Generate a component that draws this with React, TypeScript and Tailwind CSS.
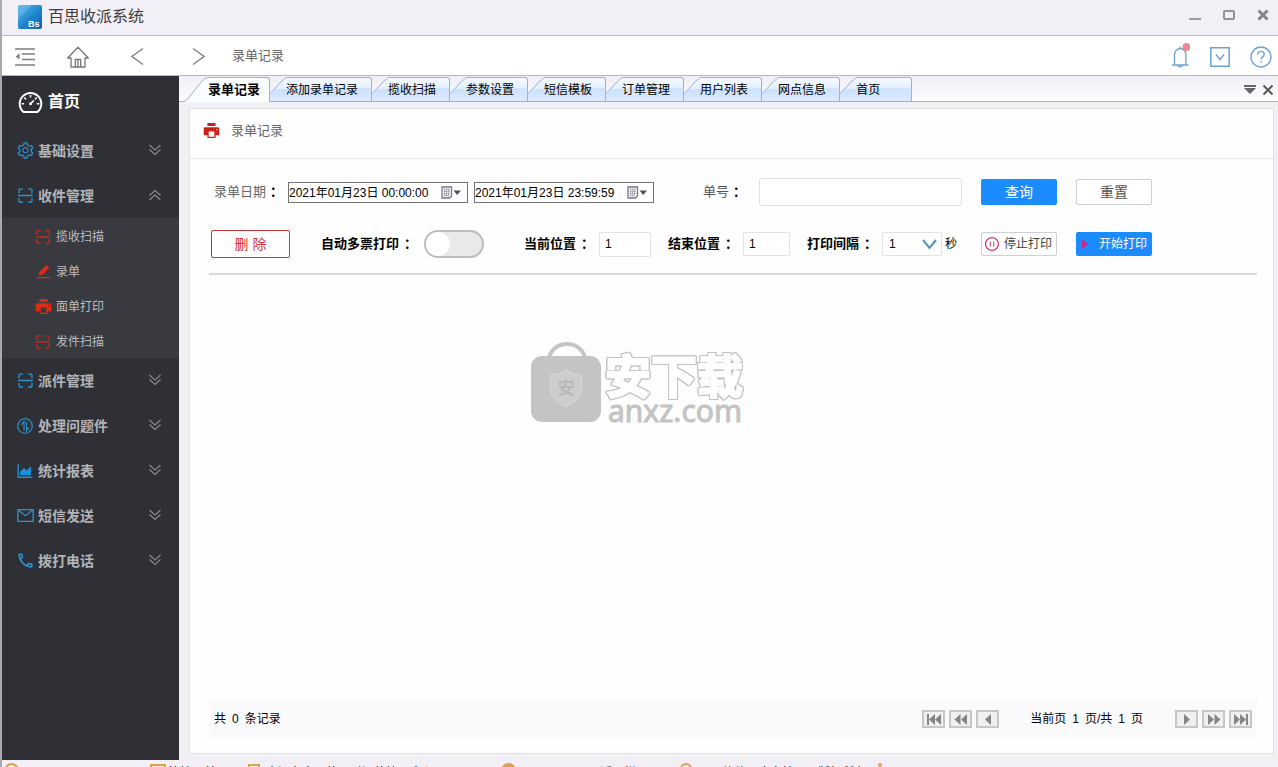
import React from "react";
import {
  AiFillEdit,
  AiFillPrinter,
  AiOutlineAreaChart,
  AiOutlineDashboard,
  AiOutlineMail,
  AiOutlinePauseCircle,
  AiOutlineScan,
  AiOutlineSetting,
} from "react-icons/ai";
import { MdOutlineCall } from "react-icons/md";

/* ---------- icons ---------- */

function Logo() {
  return (
    <svg width="24" height="24" viewBox="0 0 24 24" aria-hidden="true">
      <defs>
        <linearGradient id="logo" x1="0" y1="0" x2="1" y2="1">
          <stop offset="0" stopColor="#5db4e6" />
          <stop offset="0.5" stopColor="#2589cf" />
          <stop offset="1" stopColor="#0e5da6" />
        </linearGradient>
      </defs>
      <rect width="24" height="24" rx="2" fill="url(#logo)" />
      <path d="M0 14 14 0H2Q0 0 0 2Z" fill="#6fc0ec" opacity="0.5" />
      <path d="M24 6 12 12 0 24h10L24 12Z" fill="#1b7cc6" opacity="0.5" />
      <text x="10" y="22" fontSize="9" fontWeight="700" fill="#fff" fontFamily="Liberation Sans, sans-serif">
        Bs
      </text>
    </svg>
  );
}

function MenuFoldIcon() {
  return (
    <svg width="20" height="18" viewBox="0 0 20 18" fill="none" stroke="#7d7d7d" strokeWidth="1.300" aria-hidden="true">
      <path d="M0 1h20M7 6h13M7 11.500h13M0 17h20" />
      <path d="M4.500 5.500v6L.5 8.500Z" fill="#7d7d7d" stroke="none" />
    </svg>
  );
}

function HomeIcon() {
  return (
    <svg width="22" height="22" viewBox="0 0 22 22" fill="none" stroke="#777" strokeWidth="1.300" aria-hidden="true">
      <path d="M.7 12 11 1.200 21.300 12H18v9h-4.300v-7.500H8.300V21H4v-9Z" strokeLinejoin="round" />
      <path d="M11 14v7M8 21h6" />
    </svg>
  );
}

function AngleIcon({ right = false }: { right?: boolean }) {
  return (
    <svg width="13" height="19" viewBox="0 0 13 19" fill="none" stroke="#858585" strokeWidth="1.400" aria-hidden="true">
      <path d={right ? "M1 1.500 12 9.500 1 17.500" : "M12 1.500 1 9.500 12 17.500"} />
    </svg>
  );
}

function BellIcon() {
  return (
    <svg width="20" height="25" viewBox="0 0 20 25" fill="none" stroke="#6ea2d6" strokeWidth="1.400" aria-hidden="true">
      <path d="M4.500 21.500V12a5.700 6.500 0 0 1 11.400 0v9.500" />
      <path d="M2 22h16.500M10.200 3.500v2.500M8 22.300a2.300 2 0 0 0 4.500 0" />
      <circle cx="16.500" cy="4" r="4" fill="#ee8591" stroke="none" />
    </svg>
  );
}

function BoxDownIcon() {
  return (
    <svg width="20" height="20" viewBox="0 0 20 20" fill="none" stroke="#6ea2d6" strokeWidth="1.500" aria-hidden="true">
      <path d="M.8.8h18.400v18.400H.8ZM6 7.500l4 5 4-5" />
    </svg>
  );
}

function HelpIcon() {
  return (
    <svg width="22" height="22" viewBox="0 0 22 22" fill="none" stroke="#6ea2d6" strokeWidth="1.400" aria-hidden="true">
      <circle cx="11" cy="11" r="10" />
      <path d="M7.700 8.500c0-4.300 6.600-4 6.600-.3 0 2.400-3.300 2.500-3.300 5.300M11 15v1.800" />
    </svg>
  );
}

function DoubleChevron({ up = false }: { up?: boolean }) {
  return (
    <svg
      width="12"
      height="12"
      viewBox="0 0 12 12"
      fill="none"
      stroke="#8b8b8f"
      strokeWidth="1.100"
      className={up ? "rotate-180" : ""}
      aria-hidden="true"
    >
      <path d="M.5 1 6 6l5.500-5M.5 5.500 6 10.500l5.500-5" />
    </svg>
  );
}

function TransferIcon() {
  return (
    <svg width="16" height="16" viewBox="0 0 16 16" fill="none" stroke="#2f8ac0" strokeWidth="1.300" aria-hidden="true">
      <circle cx="8" cy="8" r="7.300" />
      <path d="M7 12.500v-9L4.200 6.800M9.500 3.500v9l2.300-3" />
    </svg>
  );
}

function CalendarIcon() {
  return (
    <svg width="20" height="13" viewBox="0 0 20 13" aria-hidden="true">
      <path d="M1 1h9.500v9l-2 2H1Z" fill="#fff" stroke="#747480" strokeWidth="1.300" />
      <path d="M2.500 3.500H9M2.500 5.500H9M2.500 7.500H9M2.500 9.500H8M3.500 2.500v8M5.500 2.500v8M7.500 2.500v8" stroke="#a0a0ad" strokeWidth="0.800" />
      <path d="M12.500 4.500h7.500L16.200 9Z" fill="#46525f" />
    </svg>
  );
}

function PagerIcon({ kind }: { kind: string }) {
  const paths: Record<string, string> = {
    first: "M3 1h2v11H3ZM11 1v11L5 6.500ZM17 1v11L11 6.500Z",
    back: "M9.500 1v11L3.500 6.500ZM16 1v11L10 6.500Z",
    prev: "M13 1v11L7 6.500Z",
    next: "M7 1v11L13 6.500Z",
    forward: "M4 1v11L10 6.500ZM10.500 1v11L16.500 6.500Z",
    last: "M3 1v11L9 6.500ZM9 1v11L15 6.500ZM15 1h2v11h-2Z",
  };
  return (
    <svg width="19" height="13" viewBox="0 0 19 13" aria-hidden="true">
      <path d={paths[kind]} fill="#858585" />
    </svg>
  );
}

/* ---------- title bar and toolbar ---------- */

function TitleBar() {
  return (
    <header className="flex h-9 shrink-0 items-center border-b border-[#b9b7be] bg-[#f2f0f6] pr-[9px] pb-0.5 pl-4">
      <Logo />
      <h1 className="ml-1.5 text-base leading-6 text-[#3c3c3c]">百思收派系统</h1>
      <div className="mb-1 ml-auto flex items-center gap-[22px]">
        <button type="button" aria-label="最小化">
          <svg width="12" height="12" viewBox="0 0 12 12">
            <path d="M0 10h12" stroke="#9b9b9b" strokeWidth="2" />
          </svg>
        </button>
        <button type="button" aria-label="最大化">
          <svg width="12" height="12" viewBox="0 0 12 12" fill="none">
            <rect x="1" y="2" width="10" height="8" rx="1" stroke="#949494" strokeWidth="2" />
          </svg>
        </button>
        <button type="button" aria-label="关闭">
          <svg width="12" height="12" viewBox="0 0 12 12">
            <path d="m1.500 1.500 9 9m0-9-9 9" stroke="#858585" strokeWidth="3" />
          </svg>
        </button>
      </div>
    </header>
  );
}

function Toolbar() {
  return (
    <div className="flex h-10 shrink-0 items-center border-b border-[#b9b9bd] bg-white pr-1.5 pl-[13px]">
      <button type="button" aria-label="收起菜单" className="pt-0.5">
        <MenuFoldIcon />
      </button>
      <button type="button" aria-label="主页" className="ml-8 pt-0.5">
        <HomeIcon />
      </button>
      <button type="button" aria-label="后退" className="ml-[42px] pt-0.5">
        <AngleIcon />
      </button>
      <button type="button" aria-label="前进" className="ml-12 pt-0.5">
        <AngleIcon right />
      </button>
      <span className="ml-[27px] text-[13px] leading-5 text-[#666]">录单记录</span>
      <div className="ml-auto flex items-center gap-5">
        <button type="button" aria-label="通知">
          <BellIcon />
        </button>
        <button type="button" aria-label="展开" className="pt-0.5">
          <BoxDownIcon />
        </button>
        <button type="button" aria-label="帮助" className="pt-0.5">
          <HelpIcon />
        </button>
      </div>
    </div>
  );
}

/* ---------- sidebar ---------- */

type GroupProps = { icon: React.ReactNode; label: string; open?: boolean; children?: React.ReactNode };

function MenuGroup({ icon, label, open = false, children }: GroupProps) {
  return (
    <li>
      <button type="button" aria-expanded={open} className="flex h-[45px] w-full items-center pr-[18px] pl-[13px]">
        <span className="flex w-[23px] text-[#2a93d0]">
          <span className="flex w-5 justify-center">{icon}</span>
        </span>
        <span className="text-sm font-bold text-[#b4b4b8]">{label}</span>
        <span className="ml-auto pb-0.5">
          <DoubleChevron up={open} />
        </span>
      </button>
      {children}
    </li>
  );
}

const SUB_ITEMS = [
  { label: "揽收扫描", icon: <AiOutlineScan size={18} className="text-[#c42a20]" /> },
  { label: "录单", icon: <AiFillEdit size={17} className="text-[#dd2a12]" /> },
  { label: "面单打印", icon: <AiFillPrinter size={19} className="text-[#dd2a12]" /> },
  { label: "发件扫描", icon: <AiOutlineScan size={18} className="text-[#c42a20]" /> },
];

function Sidebar() {
  return (
    <nav className="w-[177px] shrink-0 bg-[#2f3035]">
      <a href="#home" className="flex h-[52px] items-center gap-1 pl-[15px] text-base font-bold text-white">
        <AiOutlineDashboard size={27} />
        首页
      </a>
      <ul>
        <MenuGroup icon={<AiOutlineSetting size={19} />} label="基础设置" />
        <MenuGroup icon={<AiOutlineScan size={19} />} label="收件管理" open>
          <ul className="bg-[#393a3f]">
            {SUB_ITEMS.map((item) => (
              <li key={item.label}>
                <a href="#menu" className="flex h-[35px] items-center pt-0.5 pl-[31px] text-xs text-[#bcbcc0]">
                  <span className="flex w-[23px]">
                    <span className="flex w-5 justify-center">{item.icon}</span>
                  </span>
                  {item.label}
                </a>
              </li>
            ))}
          </ul>
        </MenuGroup>
        <MenuGroup icon={<AiOutlineScan size={19} />} label="派件管理" />
        <MenuGroup icon={<TransferIcon />} label="处理问题件" />
        <MenuGroup icon={<AiOutlineAreaChart size={20} className="text-[#1a90d8]" />} label="统计报表" />
        <MenuGroup icon={<AiOutlineMail size={19} />} label="短信发送" />
        <MenuGroup icon={<MdOutlineCall size={19} />} label="拨打电话" />
      </ul>
    </nav>
  );
}

/* ---------- tabs ---------- */

const TABS = ["添加录单记录", "揽收扫描", "参数设置", "短信模板", "订单管理", "用户列表", "网点信息", "首页"];

function TabBar() {
  return (
    <div className="flex h-[26px] shrink-0 items-end bg-linear-to-b from-[#efeef4] to-[#fdfdff] pl-1 shadow-[inset_0_-1px_0_#9bb2d3]">
      <svg width="0" height="0" aria-hidden="true">
        <defs>
          <linearGradient id="tabFill" x1="0" y1="0" x2="0" y2="1">
            <stop offset="0" stopColor="#f6faff" />
            <stop offset="0.45" stopColor="#e4effe" />
            <stop offset="0.46" stopColor="#cbe0fd" />
            <stop offset="1" stopColor="#dcebff" />
          </linearGradient>
        </defs>
      </svg>
      <div role="tablist" className="flex">
        <button type="button" role="tab" aria-selected="true" className="flex h-[25px]">
          <svg width="25" height="25" viewBox="0 0 25 25" aria-hidden="true">
            <path d="M0 25Q3 24 5 21.500L19 4Q22 .5 26 .5V25Z" fill="#fafdff" />
            <path d="M0 24.500Q3 24 5 21.500L19 4Q22 .5 26 .5" fill="none" stroke="#9bb2d3" />
          </svg>
          <span className="flex h-[25px] items-center rounded-tr-[3px] border-t border-r border-[#9bb2d3] bg-[#fafdff] pr-[9px] text-[13px] font-bold text-black">
            录单记录
          </span>
        </button>
        {TABS.map((label) => (
          <button key={label} type="button" role="tab" aria-selected="false" className="flex h-[25px]">
            <svg width="16" height="25" viewBox="0 0 16 25" aria-hidden="true">
              <path d="M0 16.500 12 4Q15 .5 19 .5V25H0Z" fill="url(#tabFill)" />
              <path d="M0 16.500 12 4Q15 .5 19 .5M0 24.500h17" fill="none" stroke="#9bb2d3" />
            </svg>
            <span className="flex h-[25px] min-w-14 items-center rounded-tr-[3px] border-t border-r border-b border-[#9bb2d3] bg-[linear-gradient(#f6faff,#e4effe_45%,#cbe0fd_46%,#dcebff)] pr-[13px] text-xs text-black">
              {label}
            </span>
          </button>
        ))}
      </div>
      <div className="mr-1 mb-1.5 ml-auto flex items-center gap-1.5">
        <button type="button" aria-label="标签列表">
          <svg width="12" height="12" viewBox="0 0 12 12" fill="#666">
            <path d="M0 1h12v2H0ZM0 4h12L6 10Z" />
          </svg>
        </button>
        <button type="button" aria-label="关闭标签">
          <svg width="12" height="12" viewBox="0 0 12 12">
            <path d="m1.500 1.500 9 9m0-9-9 9" stroke="#5c5c5c" strokeWidth="2" />
          </svg>
        </button>
      </div>
    </div>
  );
}

/* ---------- filter form ---------- */

function DateField({ id, label, value }: { id: string; label: string; value: string }) {
  return (
    <div className="flex h-[21px] w-[180px] items-center border border-[#737373] bg-white pr-1.5">
      <input id={id} aria-label={label} defaultValue={value} className="h-full w-full min-w-0 flex-1 pb-0.5 text-xs text-black outline-none" />
      <button type="button" aria-label="选择日期">
        <CalendarIcon />
      </button>
    </div>
  );
}

const BOX = "rounded-[2px] border border-[#e2e2e2] bg-white text-xs text-black outline-none";
const BOLD_LABEL = "flex text-[13px] leading-5 font-bold text-black";

function Filters() {
  return (
    <form className="pr-4 pl-[19px]" onSubmit={(e) => e.preventDefault()}>
      <div className="flex h-[66px] items-center pl-[5px]">
        <label htmlFor="from" className="flex w-[74px] gap-1 text-[13px] leading-5 text-[#666]">
          录单日期<span className="font-bold text-black">：</span>
        </label>
        <DateField id="from" label="开始日期" value="2021年01月23日 00:00:00" />
        <div className="ml-1.5">
          <DateField id="to" label="结束日期" value="2021年01月23日 23:59:59" />
        </div>
        <label htmlFor="number" className="ml-[49px] flex w-14 gap-1 text-[13px] leading-5 text-[#555]">
          单号<span className="font-bold text-black">：</span>
        </label>
        <input id="number" className={`h-7 w-[203px] px-2 ${BOX}`} />
        <button type="submit" className="ml-[19px] h-[26px] w-[76px] rounded-[2px] bg-[#1b8cff] text-sm leading-5 text-white">
          查询
        </button>
        <button type="reset" className="ml-[19px] h-[26px] w-[76px] rounded-[2px] border border-[#ccd0d6] bg-white text-sm leading-5 text-[#555]">
          重置
        </button>
      </div>
      <div className="flex h-[50px] items-start border-b-2 border-[#d9d9d9] pl-0.5">
        <div className="flex h-[38px] items-center">
          <button type="button" className="h-7 w-[79px] rounded-[2px] border border-[#c8353f] bg-white text-sm leading-5 text-[#d9303c]">
            删 除
          </button>
          <label htmlFor="multi" className={`ml-[31px] w-[103px] gap-[5px] ${BOLD_LABEL}`}>
            自动多票打印<span>：</span>
          </label>
          <input
            id="multi"
            type="checkbox"
            role="switch"
            className="flex h-7 w-[60px] appearance-none items-center rounded-full border-2 border-[#bdbdbf] bg-[#e9e8eb] before:block before:size-6 before:rounded-full before:bg-white before:content-[''] checked:justify-end checked:bg-[#1b8cff]"
          />
          <label htmlFor="start" className={`ml-10 w-[75px] gap-[5px] ${BOLD_LABEL}`}>
            当前位置<span>：</span>
          </label>
          <input id="start" defaultValue="1" className={`h-[25px] w-[52px] px-[5px] ${BOX}`} />
          <label htmlFor="end" className={`ml-[17px] w-[75px] gap-[5px] ${BOLD_LABEL}`}>
            结束位置<span>：</span>
          </label>
          <input id="end" defaultValue="1" className={`h-6 w-[47px] px-[5px] ${BOX}`} />
          <label htmlFor="interval" className={`ml-[17px] w-[75px] gap-[5px] ${BOLD_LABEL}`}>
            打印间隔<span>：</span>
          </label>
          <div className="grid items-center">
            <select id="interval" defaultValue="1" className={`col-start-1 row-start-1 h-6 w-[60px] appearance-none px-1.5 ${BOX}`}>
              <option>1</option>
              <option>2</option>
              <option>3</option>
            </select>
            <svg
              width="15"
              height="11"
              viewBox="0 0 15 11"
              fill="none"
              stroke="#4b93cf"
              strokeWidth="2"
              className="pointer-events-none col-start-1 row-start-1 mr-[5px] justify-self-end"
              aria-hidden="true"
            >
              <path d="m1 1 6.500 8L14 1" />
            </svg>
          </div>
          <span className="ml-[3px] w-9 text-xs text-black">秒</span>
          <button
            type="button"
            className="flex h-6 w-[76px] items-center gap-1 rounded-[2px] border border-[#ccd0d6] bg-white pl-0.5 text-xs text-[#444]"
          >
            <AiOutlinePauseCircle size={16} className="text-[#d0336b]" />
            停止打印
          </button>
          <button
            type="button"
            className="ml-[19px] flex h-6 w-[76px] items-center gap-2.5 rounded-[2px] bg-[#1b8cff] pl-1.5 text-xs text-white"
          >
            <svg width="7" height="12" viewBox="0 0 7 12" aria-hidden="true">
              <path d="M0 1 6 6 0 11Z" fill="#d0278a" />
            </svg>
            开始打印
          </button>
        </div>
      </div>
    </form>
  );
}

/* ---------- pager ---------- */

function PagerButton({ kind, label }: { kind: string; label: string }) {
  return (
    <button type="button" aria-label={label} className="h-[18px] w-[23px] border-2 border-[#c6c6c6] bg-[#f0f0f2]">
      <PagerIcon kind={kind} />
    </button>
  );
}

function Pager() {
  return (
    <div className="mt-auto mr-4 mb-[15px] ml-[19px] flex h-10 shrink-0 items-center bg-[#faf9fc] px-[5px] pt-0.5 text-xs text-black">
      <p className="flex gap-1.5">
        <span>共</span>
        <span>0</span>
        <span>条记录</span>
      </p>
      <div className="ml-auto flex gap-1">
        <PagerButton kind="first" label="首页" />
        <PagerButton kind="back" label="快退" />
        <PagerButton kind="prev" label="上一页" />
      </div>
      <p className="mr-8 ml-[31px] flex gap-1.5">
        <span>当前页</span>
        <span>1</span>
        <span>页/共</span>
        <span>1</span>
        <span>页</span>
      </p>
      <div className="flex gap-1">
        <PagerButton kind="next" label="下一页" />
        <PagerButton kind="forward" label="快进" />
        <PagerButton kind="last" label="末页" />
      </div>
    </div>
  );
}

/* ---------- watermark and status bar ---------- */

function Watermark() {
  return (
    <div className="pointer-events-none absolute inset-0 flex items-center justify-center gap-1 pr-1.5 pb-1">
      <svg width="70" height="80" viewBox="0 0 70 80" aria-hidden="true">
        <path d="M18 18a18 16 0 0 1 36 0" fill="none" stroke="#c4c4c4" strokeWidth="4" />
        <rect y="14" width="70" height="66" rx="11" fill="#c4c4c4" />
        <path d="M35 28q7 5 15.500 5v13q0 12-15.500 19Q19.500 58 19.500 46V33q8.500 0 15.500-5Z" fill="#cdcdcd" stroke="#dadada" />
        <text x="35" y="52" textAnchor="middle" fontSize="17" fontWeight="700" fill="#b9b9b9" fontFamily="Noto Sans CJK SC, sans-serif">
          安
        </text>
      </svg>
      <div className="flex flex-col pt-3 text-[#c4c4c4]">
        <span className="text-[46px] leading-[46px] font-bold text-white [-webkit-text-stroke:2px_#fff] [filter:drop-shadow(1px_0_0_#c4c4c4)_drop-shadow(-1px_0_0_#c4c4c4)_drop-shadow(0_1px_0_#c4c4c4)_drop-shadow(0_-1px_0_#c4c4c4)]">
          安下载
        </span>
        <span className="pl-[3px] font-['Noto_Sans','Open_Sans',sans-serif] text-[30px] leading-[22px] [-webkit-text-stroke:1px_#c4c4c4]">
          anxz.com
        </span>
      </div>
    </div>
  );
}

function StatusBar() {
  return (
    <footer className="flex h-[7px] shrink-0 items-start overflow-hidden bg-[#f2f0f6] pt-[3px] text-xs text-black">
      <span className="mr-[131px] ml-0.5 size-[15px] shrink-0 rounded-full border-2 border-[#e0a04c]" />
      <span className="mt-px h-3 w-4 shrink-0 border-2 border-[#e0a04c]" />
      <span className="ml-0.5 w-20 shrink-0 leading-5">快捷回单</span>
      <span className="mt-px h-3 w-3 shrink-0 border-2 border-[#e0a04c]" />
      <span className="ml-1.5 w-[235px] shrink-0 leading-5">来源在自己的，时间的管理中心</span>
      <span className="size-[15px] shrink-0 rounded-full border-4 border-[#e0a04c]" />
      <span className="ml-[84px] w-20 shrink-0 leading-5">返回栏</span>
      <span className="size-3 shrink-0 rounded-full border-2 border-[#e0a04c]" />
      <span className="ml-1.5 w-[180px] shrink-0 leading-5">百思软件百度文档公司版权所有</span>
      <span className="size-1 shrink-0 rounded-full bg-[#e0a04c]" />
    </footer>
  );
}

export default function App() {
  return (
    <div className="relative flex h-screen flex-col overflow-hidden border-l-2 border-[#aaa9ae] bg-[#f1f0f5] font-['Liberation_Sans','Noto_Sans_CJK_SC',sans-serif]">
      <TitleBar />
      <Toolbar />
      <div className="flex min-h-0 flex-1">
        <Sidebar />
        <main className="flex min-w-0 flex-1 flex-col">
          <TabBar />
          <section className="mt-1.5 mr-1 mb-1.5 ml-2.5 flex min-h-0 flex-1 flex-col rounded-[2px] border border-[#e2e1e6] bg-[#fefefe]">
            <h2 className="flex h-[50px] shrink-0 items-center gap-2.5 border-b border-[#e4e4e4] pb-1.5 pl-3 text-[13px] leading-5 text-[#666]">
              <AiFillPrinter size={19} className="text-[#c9221a]" />
              录单记录
            </h2>
            <Filters />
            <Pager />
          </section>
        </main>
      </div>
      <StatusBar />
      <Watermark />
    </div>
  );
}
